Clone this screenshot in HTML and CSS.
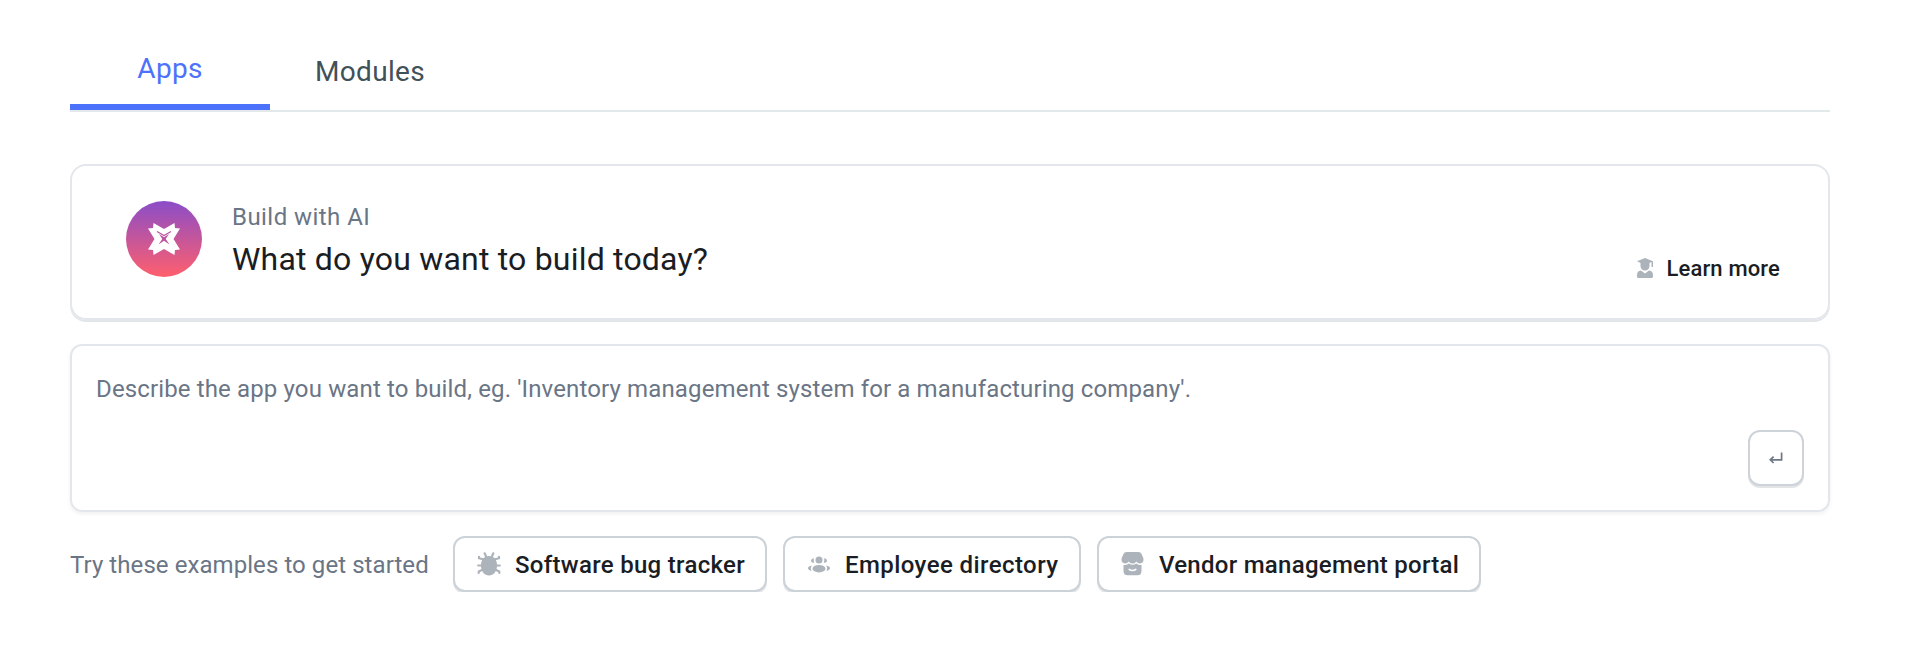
FILE: index.html
```
<!DOCTYPE html>
<html lang="en">
<head>
<meta charset="utf-8">
<title>Apps</title>
<link rel="stylesheet" href="styles.css">
</head>
<body>
<main class="page">
  <nav class="tabs">
    <a class="tab tab-active">Apps</a>
    <a class="tab tab-plain">Modules</a>
  </nav>

  <section class="intro">
    <svg class="logo" viewBox="0 0 76 76">
      <defs><linearGradient id="glow" x1="0" y1="0" x2="0" y2="1"><stop offset="0" stop-color="#8b4dc8"/><stop offset="1" stop-color="#ff5f6d"/></linearGradient></defs>
      <circle cx="38" cy="38" r="38" fill="url(#glow)"/>
      <path fill="#fff" d="M27.500 22L38 28L48.500 22L49 27L54 27.500L47.500 38L54 48.500L49 49L48.500 54L38 48L27.500 54L27 49L22 48.500L28.500 38L22 27.500L27 27Z"/>
      <path fill="none" stroke="#bd539f" stroke-width="1.200" d="M31 30.500L38 34.500L45 30.500"/>
      <path fill="#bd539f" d="M33 33L38 36.300L43 33L39.700 38L43.500 43.500L38 39.700L32.500 43.500L36.300 38Z"/>
    </svg>
    <div class="intro-text">
      <span class="eyebrow">Build with AI</span>
      <span class="headline">What do you want to build today?</span>
    </div>
    <a class="learn">
      <svg class="learn-icon" viewBox="0 0 16 20"><path fill="#adb3bb" d="M8 0L0 3.300l3.500 1.600V8a4.500 4.500 0 0 0 9 0V4.900l2-.9v5h1.500V3.300zM4 12.500l4 3 4-3a4.500 4.500 0 0 1 4 4.500v1.500q0 1.500-1.500 1.500h-13Q0 20 0 18.500V17a4.500 4.500 0 0 1 4-4.500z"/></svg>
      <span>Learn more</span>
    </a>
  </section>

  <section class="prompt">
    <span class="placeholder">Describe the app you want to build, eg. 'Inventory management system for a manufacturing company'.</span>
    <button class="send"><svg class="send-icon" viewBox="0 0 14 12"><path fill="none" stroke="#6f7785" stroke-width="1.700" d="M12.600 .5V7.800H1.500M4.600 4.600L1.300 7.800l3.300 3.200"/></svg></button>
  </section>

  <section class="examples">
    <span class="hint">Try these examples to get started</span>
    <button class="chip chip-bug">
      <svg class="chip-icon" viewBox="0 0 24 24"><g fill="none" stroke="#adb3bb" stroke-width="2.200" stroke-linecap="round" stroke-linejoin="round"><path d="M7 7.500L2 6.200V4.800M5 13.500H1.200M6 17.500L1.700 19.500V21M17 7.500l5-1.300V4.800M19 13.500h3.800M18 17.500l4.300 2V21M9.300 5L7.700 1.300M14.700 5l1.600-3.700"/></g><path fill="#adb3bb" d="M12 4c5 0 8 3.500 8 9.500s-3.500 10-8 10-8-4-8-10S7 4 12 4z"/></svg>
      <span>Software bug tracker</span>
    </button>
    <button class="chip chip-people">
      <svg class="chip-icon" viewBox="0 0 24 24"><g fill="#adb3bb"><circle cx="12" cy="8" r="3.500"/><ellipse cx="12" cy="16.700" rx="6.500" ry="3.700"/><path d="M7 6.300q-1 2 .2 4.300Q4 11 4 8.800q0-2 3-2.500zM17 6.300q1 2-.2 4.300 3.200.4 3.200-1.800 0-2-3-2.500zM5 13.500q-2 2.500-.5 5.500Q1 18 1 16.300q0-2 4-2.800zM19 13.500q2 2.500.5 5.500 3.500-1 3.500-2.700 0-2-4-2.800z"/></g></svg>
      <span>Employee directory</span>
    </button>
    <button class="chip chip-shop">
      <svg class="chip-icon" viewBox="0 0 24 24"><path fill="#adb3bb" d="M5.500 0h12q2.200 0 3 2L22.300 6q1 5-3.300 5.400-2.500 0-3.700-2-1.500 2.200-3.800 2.200t-3.800-2.200Q6.500 11.400 4 11.400-.3 11 .7 6L2.500 2q.8-2 3-2z"/><path fill="#adb3bb" d="M2.500 13q3.200.3 5.200-1.500 3.800 2.600 7.600 0 2 1.800 5.200 1.500v6q0 4.200-4 4.200h-10q-4 0-4-4.200z"/><path fill="none" stroke="#fff" stroke-width="1.700" stroke-linecap="round" d="M8.300 17.500q3.200 2 6.400 0"/></svg>
      <span>Vendor management portal</span>
    </button>
  </section>
</main>
</body>
</html>
```
FILE: styles.css
```
* { box-sizing: border-box; }
body { margin: 0; background: #fff; font-family: Roboto, "Liberation Sans", sans-serif; font-size: 24px; }
.page { display: flex; flex-direction: column; padding: 36px 82px 0 70px; }
.tabs { display: flex; height: 76px; border-bottom: 2px solid #e3e8eb; font-size: 28px; }
.tab { display: flex; align-items: center; justify-content: center; width: 200px; height: 74px; padding-bottom: 2px; line-height: 32px; letter-spacing: .3px; white-space: nowrap; }
.tab-active { color: #4c71fb; border-bottom: 6px solid #4c71fb; }
.tab-plain { color: #3f5159; }
.intro { display: flex; height: 156px; margin-top: 52px; padding: 35px 48px 0 54px; border: 2px solid #e3e7eb; border-radius: 16px; box-shadow: 0 2px 0 #e3e6e9; }
.logo { width: 76px; height: 76px; flex: none; }
.intro-text { display: flex; flex-direction: column; flex: 1; margin-left: 30px; white-space: nowrap; }
.eyebrow { color: #6a7585; line-height: 32px; letter-spacing: .45px; }
.headline { margin-top: 6px; font-size: 32px; line-height: 40px; letter-spacing: .2px; color: #1a1d23; }
.learn { display: flex; align-items: center; height: 32px; margin-top: 51px; gap: 13px; font-size: 22px; font-weight: 500; letter-spacing: .15px; color: #1a1d23; }
.learn-icon { width: 16px; height: 20px; }
.prompt { display: flex; justify-content: space-between; height: 168px; margin-top: 24px; padding: 27px 24px 24px; border: 2px solid #e3e7ec; border-radius: 12px; box-shadow: 0 2px 4px rgba(0, 0, 0, .06); }
.placeholder { color: #6a7585; line-height: 32px; letter-spacing: .135px; white-space: nowrap; }
.send { display: flex; align-items: center; justify-content: center; align-self: flex-end; width: 56px; height: 56px; padding: 0; border: 2px solid #cdd3d9; border-radius: 12px; background: #fff; box-shadow: 0 2px 0 #e2e4e6; }
.send-icon { width: 14px; height: 12px; }
.examples { display: flex; align-items: center; gap: 16px; height: 56px; margin-top: 24px; }
.hint { width: 367px; padding-top: 2px; color: #6a7585; line-height: 32px; letter-spacing: .07px; white-space: nowrap; }
.chip { display: flex; align-items: center; gap: 14px; height: 56px; padding: 0 0 0 22px; border: 2px solid #cbd2d8; border-radius: 12px; background: #fff; box-shadow: 0 2px 0 #e3e5e7; font: inherit; font-weight: 500; color: #1a1d23; white-space: nowrap; }
.chip span { padding-top: 2px; }
.chip-icon { width: 24px; height: 24px; flex: none; }
.chip-bug { width: 314px; letter-spacing: .3px; }
.chip-people { width: 298px; letter-spacing: .42px; }
.chip-shop { width: 384px; letter-spacing: .27px; }
```
